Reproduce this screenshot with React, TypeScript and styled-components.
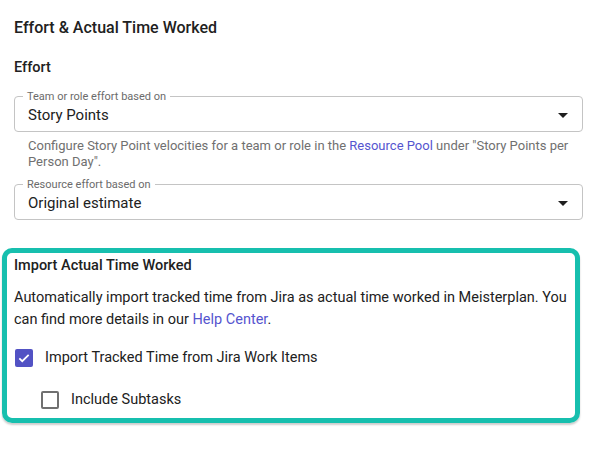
import React from 'react';
import styled, { createGlobalStyle } from 'styled-components';

const GlobalStyle = createGlobalStyle`
  body {
    margin: 0;
    background: #ffffff;
    font-family: Roboto, "Noto Sans", Arial, sans-serif;
    color: rgba(0, 0, 0, 0.87);
  }
`;

const Page = styled.div`
  padding: 16px 13px 20px 14px;
  display: flex;
  flex-direction: column;
`;

const Title = styled.h2`
  margin: 0;
  font-size: 16px;
  line-height: 24px;
  font-weight: 500;
  color: #212121;
`;

const SectionTitle = styled.h3`
  margin: 18px 0 0;
  font-size: 14.5px;
  line-height: 20px;
  font-weight: 500;
  color: #212121;
`;

const Field = styled.div<{ $top: number }>`
  position: relative;
  margin-top: ${p => p.$top}px;
  height: 36px;
  display: flex;
  align-items: center;
  padding: 0 14px 0 14px;
  box-sizing: border-box;
`;

const Outline = styled.fieldset`
  position: absolute;
  inset: -5px 0 0 0;
  margin: 0;
  padding: 0 8px;
  border: 1px solid #c4c4c4;
  border-radius: 4px;
  pointer-events: none;
`;

const Legend = styled.legend`
  padding: 0 4px;
  font-size: 11px;
  line-height: 11px;
  color: #6b6b6b;
  white-space: nowrap;
`;

const Value = styled.span`
  flex: 1;
  font-size: 15px;
  color: #212121;
  padding-top: 2px;
`;

const Arrow = styled.span`
  width: 0;
  height: 0;
  border-left: 5px solid transparent;
  border-right: 5px solid transparent;
  border-top: 5px solid #1f1f1f;
  margin-right: 1px;
  margin-top: 2px;
`;

const Helper = styled.p`
  margin: 6px 0 0 14px;
  font-size: 13px;
  line-height: 16px;
  color: #707070;
`;

const Link = styled.a`
  color: #5555cf;
  text-decoration: none;
`;

const Highlight = styled.section`
  margin: 28px 3px 0 -12px;
  border: 5px solid #17bfae;
  border-radius: 10px;
  padding: 3px 8px 7px 7px;
  box-shadow: 0 2px 2px rgba(0, 0, 0, 0.2);
`;

const BoxTitle = styled.h4`
  margin: 0;
  font-size: 14.5px;
  line-height: 20px;
  font-weight: 500;
  color: #212121;
`;

const Paragraph = styled.p`
  margin: 11px 0 0;
  font-size: 14.5px;
  line-height: 22px;
  color: #212121;
`;

const CheckRow = styled.label<{ $indent?: boolean; $top: number }>`
  display: flex;
  align-items: center;
  gap: 12px;
  margin-top: ${p => p.$top}px;
  margin-left: ${p => (p.$indent ? 27 : 1)}px;
  font-size: 14.5px;
  line-height: 22px;
  color: #212121;
`;

const Box = styled.span<{ $checked?: boolean }>`
  width: 18px;
  height: 18px;
  box-sizing: border-box;
  border-radius: 2px;
  display: flex;
  align-items: center;
  justify-content: center;
  background: ${p => (p.$checked ? '#5252c4' : 'transparent')};
  border: ${p => (p.$checked ? 'none' : '2px solid #707070')};
  flex-shrink: 0;
`;

const Checkbox: React.FC<{ checked?: boolean }> = ({ checked }) => (
  <Box $checked={checked}>
    {checked && (
      <svg width="14" height="14" viewBox="0 0 24 24">
        <path d="M4 12.5l5 5L20 6.5" fill="none" stroke="#fff" strokeWidth="3" />
      </svg>
    )}
  </Box>
);

const App: React.FC = () => (
  <>
    <GlobalStyle />
    <Page>
      <Title>Effort &amp; Actual Time Worked</Title>
      <SectionTitle>Effort</SectionTitle>
      <Field $top={18}>
        <Outline>
          <Legend>Team or role effort based on</Legend>
        </Outline>
        <Value>Story Points</Value>
        <Arrow />
      </Field>
      <Helper>
        Configure Story Point velocities for a team or role in the <Link>Resource Pool</Link> under "Story Points per
        Person Day".
      </Helper>
      <Field $top={14}>
        <Outline>
          <Legend>Resource effort based on</Legend>
        </Outline>
        <Value>Original estimate</Value>
        <Arrow />
      </Field>
      <Highlight>
        <BoxTitle>Import Actual Time Worked</BoxTitle>
        <Paragraph>
          Automatically import tracked time from Jira as actual time worked in Meisterplan. You can find more details
          in our <Link>Help Center</Link>.
        </Paragraph>
        <CheckRow $top={16}>
          <Checkbox checked />
          Import Tracked Time from Jira Work Items
        </CheckRow>
        <CheckRow $indent $top={20}>
          <Checkbox />
          Include Subtasks
        </CheckRow>
      </Highlight>
    </Page>
  </>
);

export default App;
